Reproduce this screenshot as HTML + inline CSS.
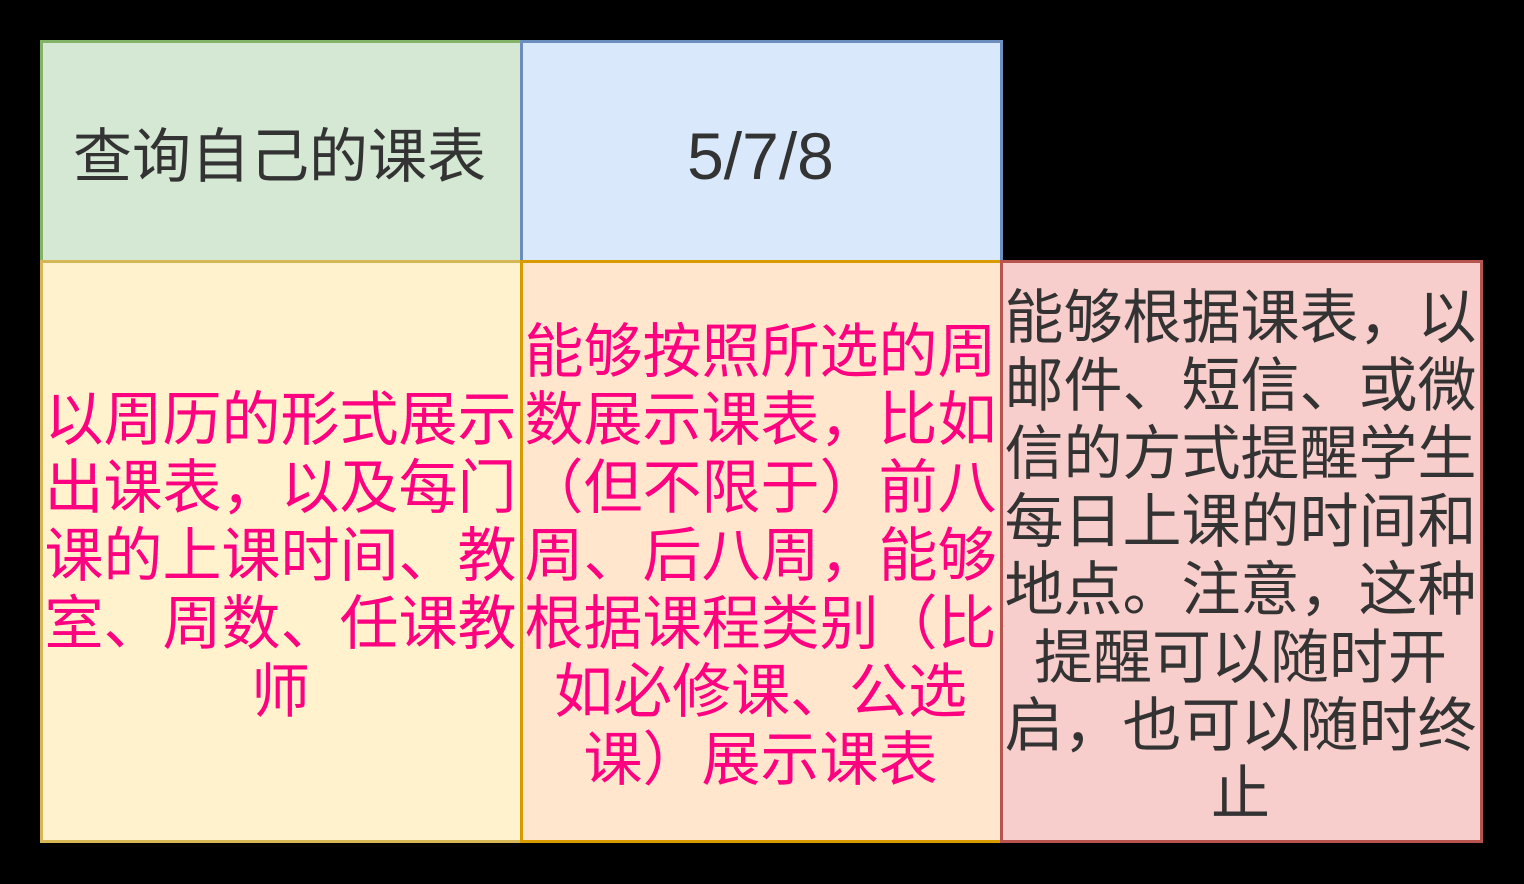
<!DOCTYPE html>
<html><head><meta charset="utf-8"><style>
html,body{margin:0;padding:0;background:#000;width:1524px;height:884px;overflow:hidden}
.b{position:absolute;box-sizing:border-box;border:3px solid;display:flex;align-items:center;justify-content:center;text-align:center;font-family:"Liberation Sans","Noto Sans CJK SC",sans-serif;font-size:59px;line-height:68px;word-break:break-all;padding:8px 2px 0 0}
.p{color:#ff0080}
.d{color:#333}
</style></head><body>
<div class="b d" style="left:40px;top:40px;width:483px;height:223px;background:#d5e8d4;border-color:#82b366;padding:10px 4px 0 0">查询自己的课表</div>
<div class="b d" style="left:520px;top:40px;width:483px;height:223px;background:#dae8fc;border-color:#6c8ebf;font-size:66px;padding:8px 2px 0 0">5/7/8</div>
<div class="b p" style="left:40px;top:260px;width:483px;height:583px;background:#fff2cc;border-color:#d6b656">以周历的形式展示出课表，以及每门课的上课时间、教室、周数、任课教师</div>
<div class="b p" style="left:520px;top:260px;width:483px;height:583px;background:#ffe6cc;border-color:#d79b00">能够按照所选的周数展示课表，比如（但不限于）前八周、后八周，能够根据课程类别（比如必修课、公选课）展示课表</div>
<div class="b d" style="left:1000px;top:260px;width:483px;height:583px;background:#f8cecc;border-color:#b85450">能够根据课表，以邮件、短信、或微信的方式提醒学生每日上课的时间和地点。注意，这种提醒可以随时开启，也可以随时终止</div>
</body></html>
